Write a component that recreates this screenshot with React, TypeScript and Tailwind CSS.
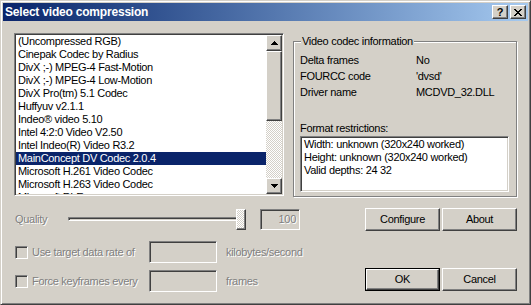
const sunken =
  'border border-t-[#808080] border-l-[#808080] border-r-white border-b-white shadow-[inset_1px_1px_0_#404040,inset_-1px_-1px_0_#d4d0c8]';
const raised =
  'border border-t-white border-l-white border-r-[#404040] border-b-[#404040] shadow-[inset_-1px_-1px_0_#808080] bg-[#d4d0c8]';
const dither =
  '[background-image:repeating-conic-gradient(#d4d0c8_0_25%,#ffffff_0_50%)] [background-size:2px_2px]';
const disabledText = 'text-[#808080] [text-shadow:1px_1px_0_#fff]';

const codecs = [
  '(Uncompressed RGB)',
  'Cinepak Codec by Radius',
  'DivX ;-) MPEG-4 Fast-Motion',
  'DivX ;-) MPEG-4 Low-Motion',
  'DivX Pro(tm) 5.1 Codec',
  'Huffyuv v2.1.1',
  'Indeo® video 5.10',
  'Intel 4:2:0 Video V2.50',
  'Intel Indeo(R) Video R3.2',
  'MainConcept DV Codec 2.0.4',
  'Microsoft H.261 Video Codec',
  'Microsoft H.263 Video Codec',
  'Microsoft RLE',
];

function Arrow({ down }: { down?: boolean }) {
  return (
    <svg width="7" height="4" viewBox="0 0 7 4" shapeRendering="crispEdges">
      {down ? (
        <path d="M0 0h7v1H0zM1 1h5v1H1zM2 2h3v1H2zM3 3h1v1H3z" fill="#000" />
      ) : (
        <path d="M3 0h1v1H3zM2 1h3v1H2zM1 2h5v1H1zM0 3h7v1H0z" fill="#000" />
      )}
    </svg>
  );
}

function Button({ label, isDefault }: { label: string; isDefault?: boolean }) {
  const inner = (
    <div className={`${raised} flex h-full w-full items-center justify-center text-black`}>{label}</div>
  );
  if (isDefault) {
    return <div className="h-[23px] w-[75px] border border-black">{inner}</div>;
  }
  return <div className="h-[23px] w-[75px]">{inner}</div>;
}

function CheckRow({ label, unit }: { label: string; unit: string }) {
  return (
    <div className="flex h-[22px] items-center">
      <div className={`${sunken} ml-[1px] h-[13px] w-[13px] bg-[#d4d0c8]`} />
      <span className={`ml-[4px] w-[117px] ${disabledText}`}>{label}</span>
      <div className={`${sunken} h-[22px] w-[68px] bg-[#d4d0c8]`} />
      <span className={`ml-[9px] ${disabledText}`}>{unit}</span>
    </div>
  );
}

export default function App() {
  return (
    <div className="flex h-[305px] w-[531px] flex-col border border-t-[#d4d0c8] border-l-[#d4d0c8] border-r-[#404040] border-b-[#404040] bg-[#d4d0c8] p-[2px] font-['Liberation_Sans',sans-serif] text-[11px] leading-[13px] tracking-[-0.3px] shadow-[inset_1px_1px_0_#fff,inset_-1px_-1px_0_#808080]">
      {/* Title bar */}
      <div className="flex h-[18px] items-center justify-between bg-linear-to-r from-[#0a246a] to-[#a6caf0] pl-[2px] pr-[2px]">
        <span className="text-[12px] font-bold tracking-[-0.2px] text-white">Select video compression</span>
        <div className="flex gap-[2px]">
          <div className={`${raised} flex h-[14px] w-[16px] items-center justify-center text-[11px] font-bold leading-none tracking-normal text-black`}>
            ?
          </div>
          <div className={`${raised} flex h-[14px] w-[16px] items-center justify-center`}>
            <svg width="8" height="7" viewBox="0 0 8 7" shapeRendering="crispEdges">
              <path
                d="M0 0h2v1H0zM6 0h2v1H6zM1 1h2v1H1zM5 1h2v1H5zM2 2h4v1H2zM3 3h2v1H3zM2 4h4v1H2zM1 5h2v1H1zM5 5h2v1H5zM0 6h2v1H0zM6 6h2v1H6z"
                fill="#000"
              />
            </svg>
          </div>
        </div>
      </div>

      <div className="flex flex-col pl-[11px] pt-[12px]">
        <div className="flex items-start">
          {/* Codec list */}
          <div className={`${sunken} flex h-[163px] w-[270px] bg-white p-[1px]`}>
            <div className="h-full flex-1 overflow-hidden">
              {codecs.map((c) => {
                const sel = c.startsWith('MainConcept');
                return (
                  <div
                    key={c}
                    className={`h-[13px] whitespace-nowrap pl-[2px] ${sel ? 'bg-[#0a246a] text-white' : 'text-black'}`}
                  >
                    {c}
                  </div>
                );
              })}
            </div>
            <div className="flex w-[16px] flex-col">
              <div className={`${raised} flex h-[16px] items-center justify-center`}>
                <Arrow />
              </div>
              <div className={`${raised} h-[70px]`} />
              <div className={`flex-1 ${dither}`} />
              <div className={`${raised} flex h-[16px] items-center justify-center`}>
                <Arrow down />
              </div>
            </div>
          </div>

          {/* Codec info group */}
          <div className="relative ml-[9px] mt-[8px] h-[156px] w-[224px] border border-[#808080] pl-[6px] pt-[10px] shadow-[1px_1px_0_#fff,inset_1px_1px_0_#fff]">
            <span className="absolute -top-[7px] left-[7px] bg-[#d4d0c8] px-[1px] text-black">Video codec information</span>
            {[
              ['Delta frames', 'No'],
              ['FOURCC code', "'dvsd'"],
              ['Driver name', 'MCDVD_32.DLL'],
            ].map(([k, v]) => (
              <div key={k} className="flex h-[16px] items-center text-black">
                <span className="w-[116px]">{k}</span>
                <span>{v}</span>
              </div>
            ))}
            <div className="mt-[22px] h-[13px] text-black">Format restrictions:</div>
            <div className={`${sunken} mt-[1px] h-[56px] w-[209px] bg-white pl-[3px] pt-[1px] text-black`}>
              <div>Width: unknown (320x240 worked)</div>
              <div>Height: unknown (320x240 worked)</div>
              <div>Valid depths: 24 32</div>
            </div>
          </div>
        </div>

        {/* Lower controls */}
        <div className="mt-[11px] flex">
          <div className="flex w-[351px] flex-col">
            <div className="flex h-[22px] items-center">
              <span className={`ml-[1px] w-[53px] ${disabledText}`}>Quality</span>
              <div className="relative h-[22px] w-[178px]">
                <div className={`${sunken} mt-[9px] h-[4px] w-[176px]`} />
                <div className={`absolute right-0 top-[1px] h-[21px] w-[10px] ${raised} ${dither}`} />
              </div>
              <div className={`${sunken} ml-[14px] flex h-[21px] w-[40px] items-center justify-end bg-[#d4d0c8] pr-[3px] ${disabledText}`}>
                100
              </div>
            </div>
            <div className="mt-[11px]">
              <CheckRow label="Use target data rate of" unit="kilobytes/second" />
            </div>
            <div className="mt-[7px]">
              <CheckRow label="Force keyframes every" unit="frames" />
            </div>
          </div>
          <div className="flex flex-col">
            <div className="flex gap-[2px]">
              <Button label="Configure" />
              <Button label="About" />
            </div>
            <div className="mt-[37px] flex gap-[2px]">
              <Button label="OK" isDefault />
              <Button label="Cancel" />
            </div>
          </div>
        </div>
      </div>
    </div>
  );
}
